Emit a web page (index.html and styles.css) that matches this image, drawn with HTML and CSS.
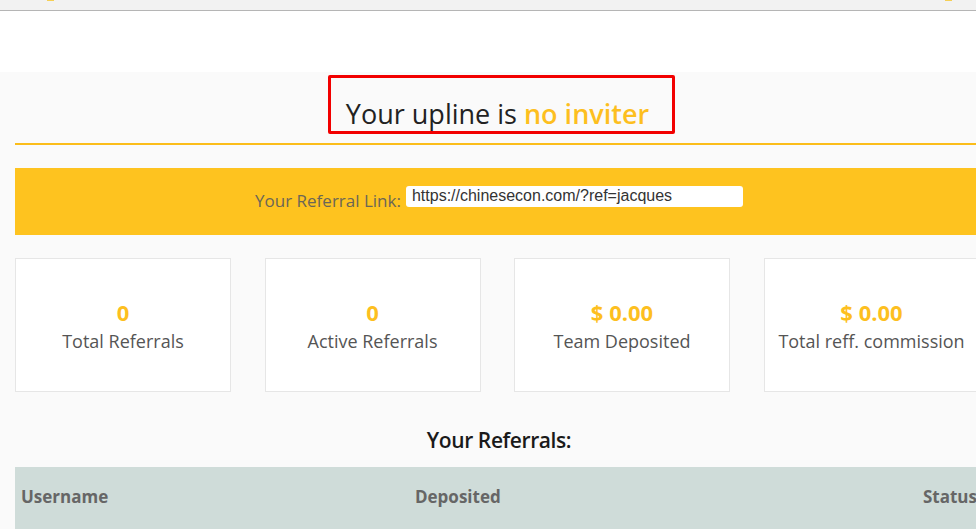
FILE: index.html
```html
<!DOCTYPE html>
<html lang="en">

<head>
    <meta charset="UTF-8">
    <meta name="viewport" content="width=device-width, initial-scale=1.0">
    <title>Referrals</title>
    <link rel="stylesheet" href="styles.css">
</head>

<body>
    <div class="topbar">
        <span class="tab tab-left"></span>
        <span class="tab tab-right"></span>
    </div>
    <div class="hero"></div>
    <div class="main">
        <div class="container">
            <div class="upline">
                <h2 class="upline-box">Your upline is <span class="accent">no inviter</span></h2>
            </div>
            <div class="ref-band">
                <label class="ref-label">Your Referral Link:</label>
                <input class="ref-input" type="text" value="https://chinesecon.com/?ref=jacques" readonly>
            </div>
            <div class="stats">
                <div class="stat">
                    <div class="num">0</div>
                    <div class="label">Total Referrals</div>
                </div>
                <div class="stat">
                    <div class="num">0</div>
                    <div class="label">Active Referrals</div>
                </div>
                <div class="stat">
                    <div class="num">$ 0.00</div>
                    <div class="label">Team Deposited</div>
                </div>
                <div class="stat">
                    <div class="num">$ 0.00</div>
                    <div class="label">Total reff. commission</div>
                </div>
            </div>
            <h3 class="list-title">Your Referrals:</h3>
            <table class="ref-table">
                <thead>
                    <tr>
                        <th class="col-user">Username</th>
                        <th class="col-dep">Deposited</th>
                        <th>Status</th>
                    </tr>
                </thead>
            </table>
        </div>
    </div>
</body>

</html>
```

FILE: styles.css
```css
html,
body {
    margin: 0;
    overflow: hidden;
    background-color: #fff;
    font-family: "Open Sans", "Liberation Sans", sans-serif;
}

.topbar {
    position: relative;
    height: 10px;
    background-color: #f2f2f2;
    border-bottom: 1px solid #b5b5b5;
}

/* 顶部被截掉的小黄块 */
.topbar .tab {
    position: absolute;
    top: 0;
    width: 7px;
    height: 1px;
    background-color: #f5cf55;
}

.topbar .tab-left {
    left: 47px;
}

.topbar .tab-right {
    left: 945px;
}

.hero {
    height: 61px;
    background-color: #fff;
}

.main {
    background-color: #fafafa;
    padding-top: 3px;
    height: 600px;
}

.container {
    width: 968px;
    margin-left: 15px;
}

.upline {
    text-align: center;
    border-bottom: 2px solid #fbbd1a;
    padding-bottom: 9px;
}

.upline-box {
    display: inline-block;
    margin: 0;
    margin-left: 5px;
    padding: 12px 23px 0 15px;
    height: 41px;
    border: 3px solid #f20000;
    border-radius: 2px;
    font-size: 27px;
    font-weight: 400;
    line-height: 48px;
    color: #222;
}

.upline-box .accent {
    color: #fdbf1f;
    font-weight: 600;
}

.ref-band {
    display: flex;
    justify-content: center;
    align-items: center;
    margin-top: 23px;
    height: 67px;
    background-color: #fec31f;
    padding-bottom: 6px;
    box-sizing: border-box;
}

.ref-label {
    font-size: 17px;
    color: #6b6657;
    margin-top: 4px;
    margin-right: 5px;
}

.ref-input {
    width: 337px;
    height: 21px;
    box-sizing: border-box;
    margin-top: -5px;
    padding: 0 6px;
    border: none;
    border-radius: 3px;
    background-color: #fff;
    font-family: "Liberation Sans", Arial, sans-serif;
    font-size: 16px;
    color: #333;
    outline: none;
}

.stats {
    display: grid;
    grid-template-columns: repeat(4, 216px);
    column-gap: 33.5px;
    margin-top: 23px;
}

.stat {
    height: 134px;
    box-sizing: border-box;
    border: 1px solid #e6e6e6;
    background-color: #fff;
    display: flex;
    flex-direction: column;
    justify-content: center;
    align-items: center;
    padding-top: 4px;
}

.stat .num {
    font-size: 22px;
    font-weight: 700;
    color: #fdbf1f;
    line-height: 28px;
}

.stat .label {
    font-size: 18px;
    color: #555;
    line-height: 30px;
}

.list-title {
    margin: 36px 0 0;
    text-align: center;
    font-size: 21px;
    font-weight: 600;
    letter-spacing: -0.4px;
    line-height: 24px;
    color: #1a1a1a;
}

.ref-table {
    width: 100%;
    margin-top: 15px;
    border-collapse: collapse;
    background-color: #cfdcd9;
}

.ref-table th {
    padding: 20px 6px 30px;
    text-align: left;
    font-size: 17px;
    font-weight: 700;
    line-height: 20px;
    color: #666;
}

.ref-table .col-user {
    width: 382px;
}

.ref-table .col-dep {
    width: 496px;
}
```
